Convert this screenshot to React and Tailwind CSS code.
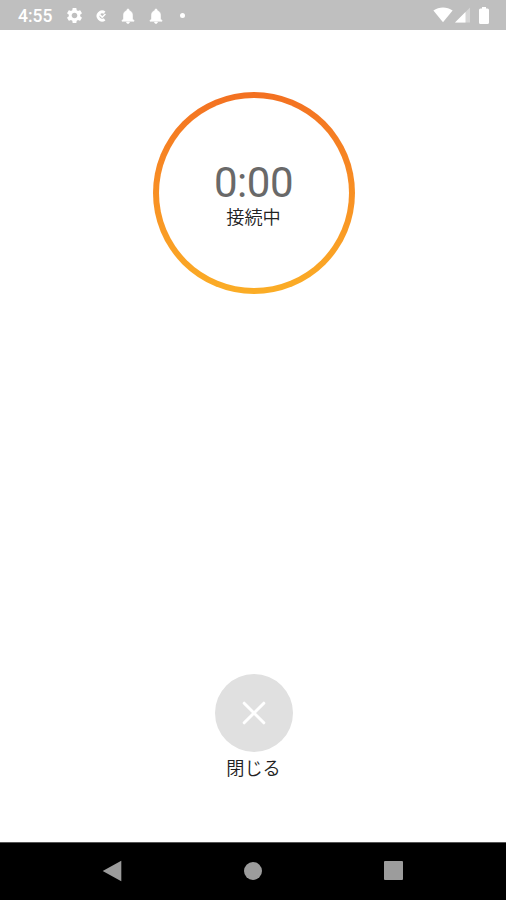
import React, { useState } from 'react'
import { MdSettings, MdNotifications } from 'react-icons/md'

function SyncIcon(){
  return (
    <svg width="12" height="14" viewBox="0 0 12 14" fill="none">
      <path d="M9.6 3.7A4.1 4.1 0 1 0 9.6 10.3" stroke="white" strokeWidth="2.8" />
      <path d="M4.4 5.4L7.2 8.2L10.4 5" stroke="white" strokeWidth="1.6" />
    </svg>
  )
}

function StatusBar(){
  return (
    <div className="h-[30px] shrink-0 bg-[#bfbfbf] text-white flex items-center justify-between pl-[18px] pr-[17px] pt-px">
      <div className="flex items-center">
        <div className="w-[46px] pt-[2px] text-[17.5px] leading-none font-medium">4:55</div>
        <div className="w-[20px] flex justify-center"><MdSettings size={19} /></div>
        <div className="w-[34px] flex justify-center"><SyncIcon /></div>
        <div className="w-[20px] flex justify-center"><MdNotifications size={18} stroke="white" strokeWidth={0.8} /></div>
        <div className="w-[35px] flex justify-center"><MdNotifications size={18} stroke="white" strokeWidth={0.8} /></div>
        <div className="w-[19px] flex justify-center"><div className="w-[5px] h-[5px] rounded-full bg-white" /></div>
      </div>
      <div className="flex items-center pb-px">
        <svg width="20" height="16" viewBox="0 0 20 16" fill="white">
          <path d="M0.4 3.6C6 -0.6 14 -0.6 19.6 3.6L10 15.2Z" />
        </svg>
        <svg className="ml-[2px]" width="16" height="16" viewBox="0 0 16 16" fill="white">
          <path d="M15 0.5V15.5H0Z" fillOpacity="0.35" />
          <path d="M10.5 5V15.5H0Z" />
        </svg>
        <svg className="ml-[8px]" width="10" height="17" viewBox="0 0 10 17" fill="white">
          <path d="M3 0H7V1.5H8.5Q10 1.5 10 3V15.5Q10 17 8.5 17H1.5Q0 17 0 15.5V3Q0 1.5 1.5 1.5H3Z" />
        </svg>
      </div>
    </div>
  )
}

// round call timer with an orange gradient ring
function CallTimer({ time, status }){
  return (
    <div className="w-[202px] h-[202px] shrink-0 rounded-full p-[6px] bg-linear-to-b from-[#f37021] to-[#fbad26]">
      <div className="w-full h-full rounded-full bg-white flex flex-col items-center pt-[64px]">
        <div className="text-[42px] leading-[42px] tracking-[-0.5px] text-[#696969]">{time}</div>
        <div className="mt-px text-[18.2px] leading-[26px] font-[350] text-[#222222]">{status}</div>
      </div>
    </div>
  )
}

function NavBar(){
  return (
    <div className="h-[58px] shrink-0 bg-black border-t border-[#555555] flex items-center justify-between pl-[102px] pr-[103px] pb-[2px]">
      <svg width="20" height="22" viewBox="0 0 20 22"><path d="M0.7 11L19.3 0.8V21.2Z" fill="#9c9c9c" /></svg>
      <div className="w-[18px] h-[18px] rounded-full bg-[#9c9c9c]" />
      <div className="w-[19px] h-[19px] rounded-[1px] bg-[#9c9c9c]" />
    </div>
  )
}

export default function App(){
  const [closed, setClosed] = useState(false)

  return (
    <div className="w-[506px] h-[900px] bg-white flex flex-col font-['Roboto','Noto_Sans_CJK_JP',sans-serif]">
      <StatusBar />
      <div className="flex-1 min-h-0 flex flex-col items-center justify-between pt-[62px] pb-[60px] pl-px">
        <CallTimer time="0:00" status={closed ? '' : '接続中'} />
        <div className="flex flex-col items-center">
          <button className="w-[78px] h-[78px] rounded-full bg-[#e0e0e0] flex items-center justify-center" onClick={()=>setClosed(true)}>
            <svg width="24" height="24" viewBox="0 0 24 24" stroke="white" strokeWidth="3" strokeLinecap="round">
              <path d="M2.2 2.2L21.8 21.8M21.8 2.2L2.2 21.8" />
            </svg>
          </button>
          <div className="mt-[4px] text-[18.2px] leading-[26px] font-[350] text-[#222222]">閉じる</div>
        </div>
      </div>
      <NavBar />
    </div>
  )
}
